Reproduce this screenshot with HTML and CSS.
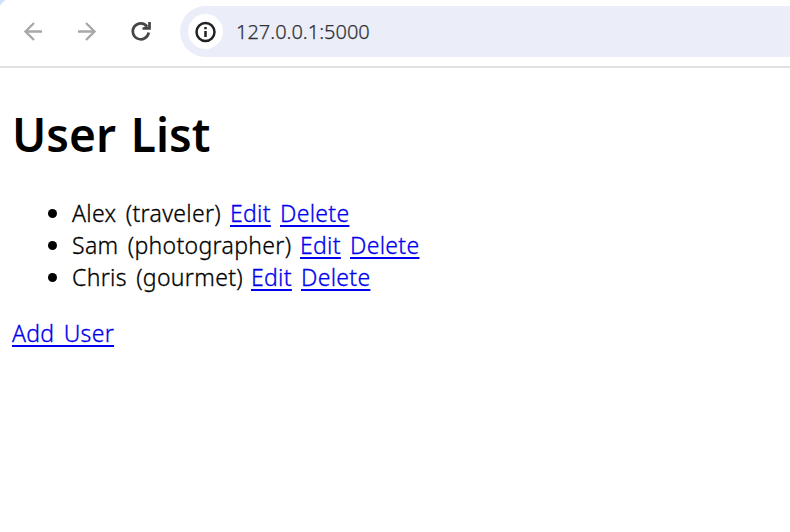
FILE: index.html
```html
<!DOCTYPE html>
<html lang="en">
<head>
<meta charset="utf-8">
<title>User List</title>
<link rel="stylesheet" href="styles.css">
</head>
<body>
<header class="toolbar">
  <nav class="nav">
    <svg class="icon muted" viewBox="0 0 24 24"><path d="M21 12.500H4.500M13 4L4.500 12.500l8.500 8.500"/></svg>
    <svg class="icon muted" viewBox="0 0 24 24"><path d="M3 12.500h16.500M11 4l8.500 8.500L11 21"/></svg>
    <svg class="icon reload" viewBox="0 0 24 24"><path d="M18.200 7.500A8 8 0 1 0 19.700 13.500M20.500 3v6.500h-7M15 9.200h5.500"/></svg>
  </nav>
  <div class="address">
    <span class="info"><svg class="icon dark" viewBox="0 0 24 24"><circle cx="11.500" cy="12" r="9"/><path d="M11.500 11v6M11.500 7v2.300"/></svg></span>
    <span class="url">127.0.0.1:5000</span>
  </div>
</header>
<main class="page">
  <h1 class="title">User List</h1>
  <ul class="users">
    <li><span class="name alex">Alex (traveler)</span><a class="edit" href="#">Edit</a><a class="delete" href="#">Delete</a></li>
    <li><span class="name sam">Sam (photographer)</span><a class="edit" href="#">Edit</a><a class="delete" href="#">Delete</a></li>
    <li><span class="name chris">Chris (gourmet)</span><a class="edit" href="#">Edit</a><a class="delete" href="#">Delete</a></li>
  </ul>
  <a class="add" href="#">Add User</a>
</main>
</body>
</html>
```
FILE: styles.css
```css
* { box-sizing: border-box; }
body { margin: 0; background: #fff; color: #000; font-family: "Noto Sans", "Noto Sans CJK KR", sans-serif; height: 532px; overflow: hidden; }
.toolbar { height: 68px; border-bottom: 2px solid #e0e1e2; display: flex; padding-top: 6px; align-items: flex-start; background: radial-gradient(circle at 12px 12px, #fff 13px, #cfe0fb 14px) 0 0 / 12px 12px no-repeat; }
.nav { display: flex; gap: 30px; width: 180px; padding: 13px 0 0 21px; }
.icon { width: 24px; height: 24px; fill: none; stroke: #444648; stroke-width: 2.4; flex: none; }
.muted { stroke: #a7a8aa; }
.reload { stroke-width: 2.7; }
.dark { stroke: #202124; stroke-width: 2.5; }
.address { flex: 1; height: 51px; border-radius: 26px 0 0 26px; background: #ebedf8; display: flex; align-items: center; padding-left: 8px; }
.info { width: 35px; height: 35px; border-radius: 50%; background: #fff; display: flex; align-items: center; justify-content: center; }
.url { margin-left: 13px; font-size: 20px; font-weight: 350; color: #303134; -webkit-text-stroke: 0.25px; }
.page { padding: 0 12px; }
.title { margin: 34px 0 0; font-size: 46px; line-height: 64px; font-weight: 600; word-spacing: 3px; }
.users, .add { font-size: 23px; line-height: 32px; font-weight: 300; word-spacing: 3px; -webkit-text-stroke: 0.3px; }
.users { margin: 31px 0 0; padding-left: 60px; list-style: none; }
.users li { height: 32px; display: flex; }
.users li::before { content: ""; width: 9px; height: 9px; margin: 12px 15px 0 -24px; border-radius: 50%; background: #000; }
a { color: #00e; text-decoration-thickness: 2px; text-underline-offset: 3px; }
.edit { width: 41px; margin-right: 9px; letter-spacing: 0.3px; }
.delete { letter-spacing: 0.3px; }
.name { letter-spacing: 0.32px; }
.alex { width: 158px; }
.sam { width: 228px; }
.chris { width: 179px; }
.add { display: inline-block; margin-top: 24px; letter-spacing: 0.3px; }
```
